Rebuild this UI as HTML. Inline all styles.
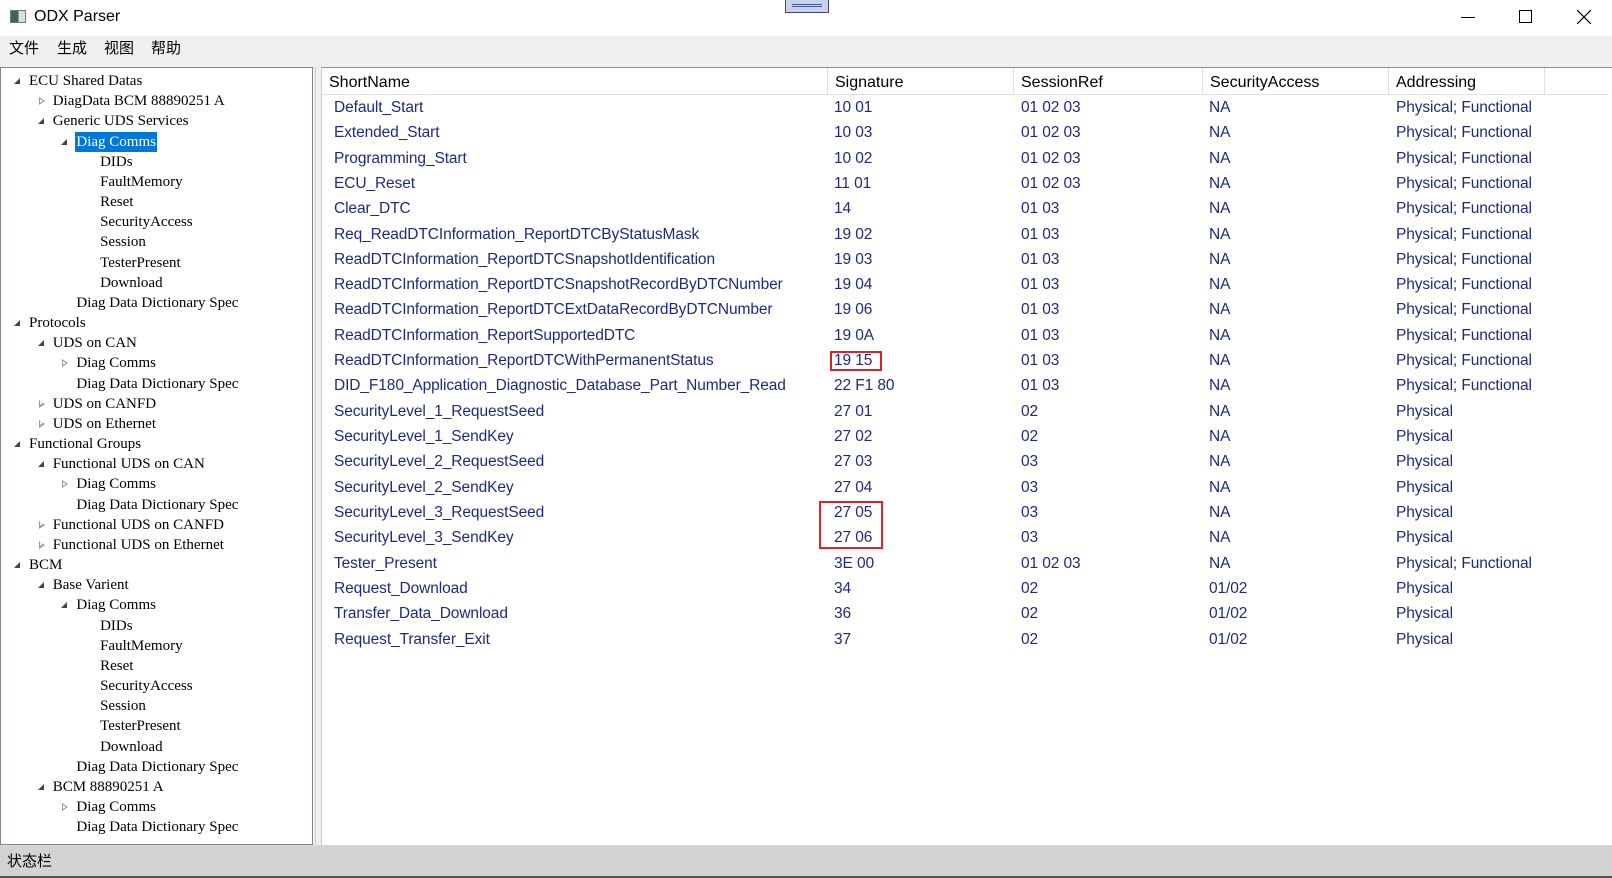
<!DOCTYPE html>
<html><head><meta charset="utf-8"><style>
*{margin:0;padding:0;box-sizing:border-box}
body{width:1612px;height:878px;overflow:hidden;background:#f0f0f0;position:relative;font-family:"Liberation Sans","Noto Sans CJK SC",sans-serif}
.abs{position:absolute;white-space:nowrap}
#title{left:0;top:0;width:1612px;height:36px;background:#fff}
#menu{left:0;top:36px;width:1612px;height:22px;background:#f0f0f0;font-size:15px;color:#000}
#tree{left:0;top:67px;width:313px;height:778px;background:#fff;border:1px solid #828790;font-family:"Liberation Serif","Noto Serif CJK SC",serif;font-size:15px;color:#000}
#grid{left:321px;top:67px;width:1291px;height:778px;background:#fff;border-top:1px solid #6a9ac8;border-left:1px solid #b8cfe0}
.tr{position:absolute;height:20px;line-height:20px;white-space:nowrap}
.ex{position:absolute;width:0;height:0;border-left:6px solid transparent;border-bottom:6px solid #444;top:7px}
.co{position:absolute;width:0;height:0;border-top:4.5px solid transparent;border-bottom:4.5px solid transparent;border-left:6px solid #999;top:6px}
.co:after{content:"";position:absolute;left:-5px;top:-2.5px;border-top:2.5px solid transparent;border-bottom:2.5px solid transparent;border-left:3px solid #fff}
.sel{background:#0078d7;color:#fff;padding:0 1px;margin-left:-1px}
.hd{position:absolute;top:0;height:27px;line-height:30px;font-size:16px;color:#000;border-right:1px solid #e0e0e0;border-bottom:1px solid #e0e0e0;padding-left:7px}
.row{position:absolute;font-size:15.5px;letter-spacing:-0.1px;color:#1f2a7c;height:25px;line-height:25px}
.row span{position:absolute;white-space:nowrap}
.box{position:absolute;border:2px solid #e0202a}
#status{left:0;top:845px;width:1612px;height:31px;background:#d3d3d3;font-size:15px;line-height:31px;padding-left:7px;border-top:1px solid #c6dce8}
</style></head><body>
<div class="abs" id="title">
  <div class="abs" style="left:10px;top:10px;width:16px;height:13px;border:1px solid #777;background:linear-gradient(90deg,#3a6a4a 0 55%,#ddd 55%)"></div>
  <div class="abs" style="left:34px;top:8px;font-size:16px;color:#000">ODX Parser</div>
  <div class="abs" style="left:785px;top:0;width:44px;height:13px;background:#c8d2ee;border:1px solid #3a4a7a;border-top:none"><div style="position:absolute;left:6px;right:6px;top:4px;height:3px;border-top:1px solid #4a5a8a;border-bottom:1px solid #4a5a8a"></div></div>
  <div class="abs" style="left:1461px;top:17px;width:14px;height:1px;background:#000"></div>
  <div class="abs" style="left:1519px;top:10px;width:13px;height:13px;border:1px solid #000"></div>
  <svg class="abs" style="left:1577px;top:10px" width="14" height="14"><path d="M0 0L14 14M14 0L0 14" stroke="#000" stroke-width="1.2"/></svg>
</div>
<div class="abs" id="menu">
  <span class="abs" style="left:9px;top:1px">文件</span>
  <span class="abs" style="left:57px;top:1px">生成</span>
  <span class="abs" style="left:104px;top:1px">视图</span>
  <span class="abs" style="left:151px;top:1px">帮助</span>
</div>
<div class="abs" id="tree">
<div id="tb"></div>
</div>
<div class="abs" style="left:313px;top:67px;width:8px;height:778px;background:#f0f0f0"><div style="position:absolute;left:2px;top:0;width:1px;height:100%;background:#ccc"></div></div>
<div class="abs" id="grid">
  <div class="hd" style="left:0;width:506px">ShortName</div>
  <div class="hd" style="left:506px;width:186px">Signature</div>
  <div class="hd" style="left:692px;width:189px">SessionRef</div>
  <div class="hd" style="left:881px;width:186px">SecurityAccess</div>
  <div class="hd" style="left:1067px;width:156px">Addressing</div>
  <div class="hd" style="left:1223px;width:64px;border-right:none"></div>
  <div id="rows"></div>
  <div class="box" style="left:508px;top:283px;width:52px;height:20px"></div>
  <div class="box" style="left:497px;top:433px;width:64px;height:48px"></div>
</div>
<div class="abs" id="status">状态栏</div>
<div class="abs" style="left:0;top:876px;width:1612px;height:2px;background:#555"></div>
<script>
var T=[[0,'E','ECU Shared Datas'],[1,'C','DiagData BCM 88890251 A'],[1,'E','Generic UDS Services'],[2,'E','Diag Comms',1],
[3,'','DIDs'],[3,'','FaultMemory'],[3,'','Reset'],[3,'','SecurityAccess'],[3,'','Session'],[3,'','TesterPresent'],[3,'','Download'],
[2,'','Diag Data Dictionary Spec'],[0,'E','Protocols'],[1,'E','UDS on CAN'],[2,'C','Diag Comms'],[2,'','Diag Data Dictionary Spec'],
[1,'C','UDS on CANFD'],[1,'C','UDS on Ethernet'],[0,'E','Functional Groups'],[1,'E','Functional UDS on CAN'],[2,'C','Diag Comms'],
[2,'','Diag Data Dictionary Spec'],[1,'C','Functional UDS on CANFD'],[1,'C','Functional UDS on Ethernet'],[0,'E','BCM'],[1,'E','Base Varient'],
[2,'E','Diag Comms'],[3,'','DIDs'],[3,'','FaultMemory'],[3,'','Reset'],[3,'','SecurityAccess'],[3,'','Session'],[3,'','TesterPresent'],[3,'','Download'],
[2,'','Diag Data Dictionary Spec'],[1,'E','BCM 88890251 A'],[2,'C','Diag Comms'],[2,'','Diag Data Dictionary Spec']];
var h='';T.forEach(function(t,i){var top=3+i*20.17,tx=28+t[0]*23.7,ax=tx-15;
h+='<div class="tr" style="top:'+top+'px;left:0;width:310px">';
if(t[1]=='E')h+='<div class="ex" style="left:'+ax+'px"></div>';
if(t[1]=='C')h+='<div class="co" style="left:'+(ax+1)+'px"></div>';
h+='<span style="position:absolute;left:'+tx+'px"'+(t[3]?' class="sel"':'')+'>'+t[2]+'</span></div>';});
document.getElementById('tb').innerHTML=h;
var R=[['Default_Start','10 01','01 02 03','NA','Physical; Functional'],['Extended_Start','10 03','01 02 03','NA','Physical; Functional'],
['Programming_Start','10 02','01 02 03','NA','Physical; Functional'],['ECU_Reset','11 01','01 02 03','NA','Physical; Functional'],
['Clear_DTC','14','01 03','NA','Physical; Functional'],['Req_ReadDTCInformation_ReportDTCByStatusMask','19 02','01 03','NA','Physical; Functional'],
['ReadDTCInformation_ReportDTCSnapshotIdentification','19 03','01 03','NA','Physical; Functional'],
['ReadDTCInformation_ReportDTCSnapshotRecordByDTCNumber','19 04','01 03','NA','Physical; Functional'],
['ReadDTCInformation_ReportDTCExtDataRecordByDTCNumber','19 06','01 03','NA','Physical; Functional'],
['ReadDTCInformation_ReportSupportedDTC','19 0A','01 03','NA','Physical; Functional'],
['ReadDTCInformation_ReportDTCWithPermanentStatus','19 15','01 03','NA','Physical; Functional'],
['DID_F180_Application_Diagnostic_Database_Part_Number_Read','22 F1 80','01 03','NA','Physical; Functional'],
['SecurityLevel_1_RequestSeed','27 01','02','NA','Physical'],['SecurityLevel_1_SendKey','27 02','02','NA','Physical'],
['SecurityLevel_2_RequestSeed','27 03','03','NA','Physical'],['SecurityLevel_2_SendKey','27 04','03','NA','Physical'],
['SecurityLevel_3_RequestSeed','27 05','03','NA','Physical'],['SecurityLevel_3_SendKey','27 06','03','NA','Physical'],
['Tester_Present','3E 00','01 02 03','NA','Physical; Functional'],['Request_Download','34','02','01/02','Physical'],
['Transfer_Data_Download','36','02','01/02','Physical'],['Request_Transfer_Exit','37','02','01/02','Physical']];
var X=[12,512,699,887,1074],g='';
R.forEach(function(r,i){var top=27+i*25.31;g+='<div class="row" style="top:'+top+'px;left:0;width:1280px">';
r.forEach(function(c,j){g+='<span style="left:'+X[j]+'px">'+c+'</span>'});g+='</div>';});
document.getElementById('rows').innerHTML=g;
</script>
</body></html>
